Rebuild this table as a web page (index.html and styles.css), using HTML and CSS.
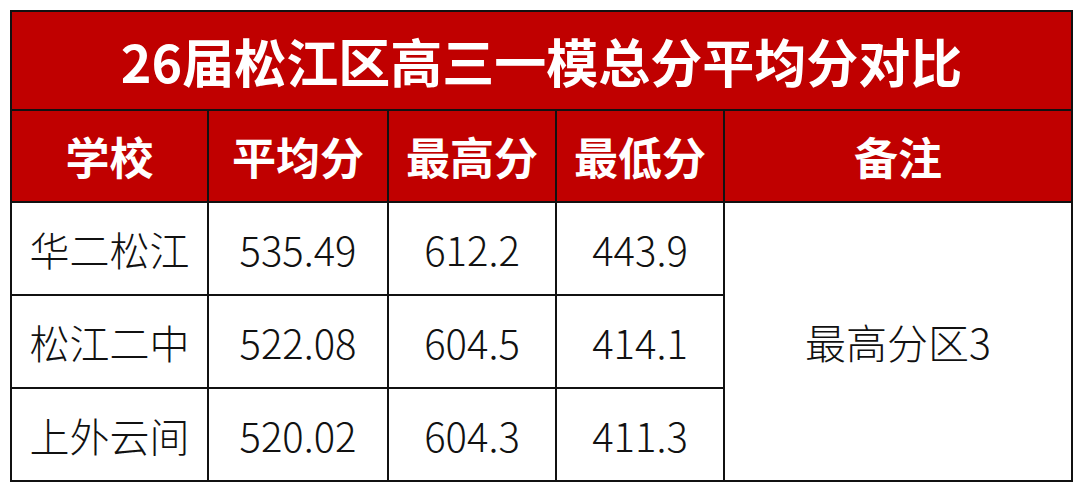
FILE: index.html
```html
<!DOCTYPE html>
<html lang="zh-CN">
<head>
<meta charset="utf-8">
<link rel="stylesheet" href="styles.css">
</head>
<body>
<table class="score-table">
  <colgroup>
    <col class="c-school">
    <col class="c-avg">
    <col class="c-max">
    <col class="c-min">
    <col class="c-note">
  </colgroup>
  <thead>
    <tr class="title-row"><th colspan="5">26届松江区高三一模总分平均分对比</th></tr>
    <tr class="head-row">
      <th>学校</th><th>平均分</th><th>最高分</th><th>最低分</th><th>备注</th>
    </tr>
  </thead>
  <tbody>
    <tr class="data-row">
      <td>华二松江</td><td>535.49</td><td>612.2</td><td>443.9</td>
      <td rowspan="3" class="note">最高分区3</td>
    </tr>
    <tr class="data-row">
      <td>松江二中</td><td>522.08</td><td>604.5</td><td>414.1</td>
    </tr>
    <tr class="data-row last">
      <td>上外云间</td><td>520.02</td><td>604.3</td><td>411.3</td>
    </tr>
  </tbody>
</table>
</body>
</html>
```
FILE: styles.css
```css
html, body {
  margin: 0;
  padding: 0;
  background: #ffffff;
}
body {
  padding: 10px;
  font-family: "Noto Sans CJK SC", "Noto Sans", sans-serif;
}
.score-table {
  border-collapse: collapse;
  table-layout: fixed;
  width: 1061px;
  border: 2px solid #111;
}
.c-school { width: 197px; }
.c-avg { width: 180px; }
.c-max { width: 168px; }
.c-min { width: 168px; }
.c-note { width: 348px; }

.score-table th,
.score-table td {
  border: 2px solid #111;
  text-align: center;
  vertical-align: middle;
  padding: 0;
}
.title-row th {
  background: #c00000;
  color: #fff;
  font-size: 52px;
  font-weight: 700;
  height: 97px;
  line-height: 1;
}
.head-row th {
  background: #c00000;
  color: #fff;
  font-size: 44px;
  font-weight: 700;
  height: 90px;
  line-height: 1;
}
.data-row td {
  color: #111;
  font-size: 40px;
  font-weight: 300;
  height: 91px;
  line-height: 1;
}
.data-row td.note {
  font-size: 41px;
}
```
